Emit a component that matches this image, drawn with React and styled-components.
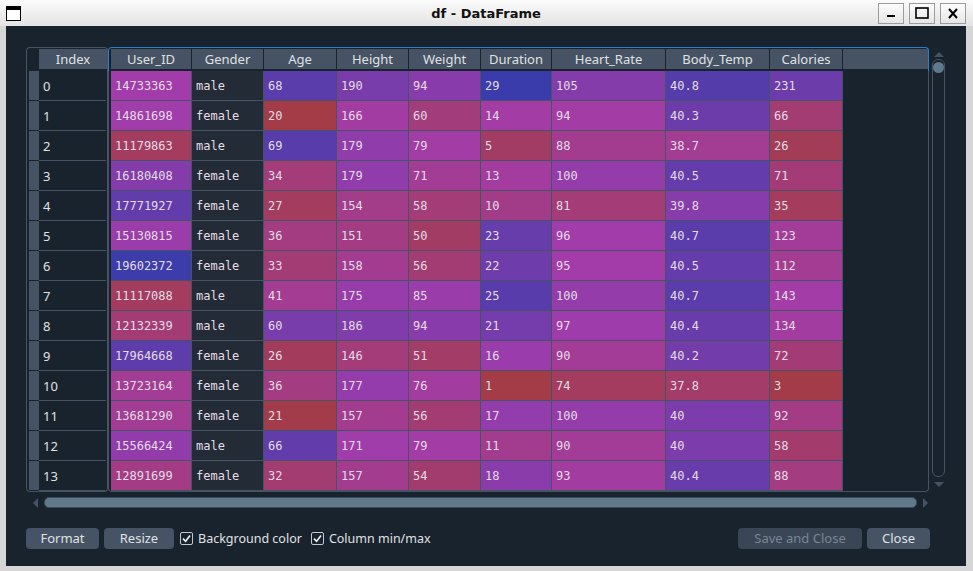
import React from "react";
import styled, { createGlobalStyle } from "styled-components";

const GlobalStyle = createGlobalStyle`
  html, body {
    margin: 0;
    padding: 0;
    background: #d6d6d6;
  }
  body {
    font-family: "Noto Sans", "DejaVu Sans", sans-serif;
  }
`;

const BG = [25, 35, 45];

const columns = [
  { key: "User_ID", w: 81, range: [10001159, 19999647] },
  { key: "Gender", w: 72 },
  { key: "Age", w: 73, range: [20, 79] },
  { key: "Height", w: 72, range: [123, 222] },
  { key: "Weight", w: 72, range: [36, 132] },
  { key: "Duration", w: 71, range: [1, 30] },
  { key: "Heart_Rate", w: 114, range: [67, 128] },
  { key: "Body_Temp", w: 104, range: [37.1, 41.5] },
  { key: "Calories", w: 73, range: [1, 314] },
];

const rows = [
  ["14733363", "male", "68", "190", "94", "29", "105", "40.8", "231"],
  ["14861698", "female", "20", "166", "60", "14", "94", "40.3", "66"],
  ["11179863", "male", "69", "179", "79", "5", "88", "38.7", "26"],
  ["16180408", "female", "34", "179", "71", "13", "100", "40.5", "71"],
  ["17771927", "female", "27", "154", "58", "10", "81", "39.8", "35"],
  ["15130815", "female", "36", "151", "50", "23", "96", "40.7", "123"],
  ["19602372", "female", "33", "158", "56", "22", "95", "40.5", "112"],
  ["11117088", "male", "41", "175", "85", "25", "100", "40.7", "143"],
  ["12132339", "male", "60", "186", "94", "21", "97", "40.4", "134"],
  ["17964668", "female", "26", "146", "51", "16", "90", "40.2", "72"],
  ["13723164", "female", "36", "177", "76", "1", "74", "37.8", "3"],
  ["13681290", "female", "21", "157", "56", "17", "100", "40", "92"],
  ["15566424", "male", "66", "171", "79", "11", "90", "40", "58"],
  ["12891699", "female", "32", "157", "54", "18", "93", "40.4", "88"],
];

// hue from blue (max) to red (min), drawn at 60% over the window colour
function hsv(h, s, v) {
  const i = Math.floor(h * 6) % 6;
  const f = h * 6 - Math.floor(h * 6);
  const p = v * (1 - s);
  const q = v * (1 - f * s);
  const t = v * (1 - (1 - f) * s);
  return [
    [v, t, p],
    [q, v, p],
    [p, v, t],
    [p, q, v],
    [t, p, v],
    [v, p, q],
  ][i];
}

function cellColor(value, range) {
  if (!range) return null;
  const [min, max] = range;
  const hue = 0.66 + 0.33 * ((max - parseFloat(value)) / (max - min));
  const rgb = hsv(hue, 0.7, 1);
  const mixed = rgb.map((c, i) => Math.round(c * 255 * 0.6 + BG[i] * 0.4));
  return `rgb(${mixed.join(",")})`;
}

const Window = styled.div`
  width: 973px;
  height: 571px;
  display: flex;
  flex-direction: column;
  background: #d6d6d6;
  overflow: hidden;
`;

const TitleBar = styled.div`
  height: 26px;
  flex: none;
  display: grid;
  grid-template-columns: 1fr auto 1fr;
  align-items: center;
  padding: 0 7px 0 6px;
  background: linear-gradient(#fbfbfb, #e3e3e3);
`;

const AppIcon = styled.div`
  width: 13px;
  height: 10px;
  border: 1px solid #000;
  border-top: 4px solid #000;
  background: #fff;
`;

const Title = styled.div`
  font-family: "DejaVu Sans", sans-serif;
  font-weight: bold;
  font-size: 13px;
  color: #111;
`;

const WinButtons = styled.div`
  justify-self: end;
  display: flex;
  gap: 5px;
`;

const WinButton = styled.div`
  width: 24px;
  height: 19px;
  border: 1px solid #9c9c9c;
  background: linear-gradient(#fdfdfd, #e6e6e6);
  display: flex;
  align-items: center;
  justify-content: center;
  svg {
    display: block;
  }
`;

const Body = styled.div`
  flex: 1;
  margin: 0 7px 5px 6px;
  background: #19232d;
  padding: 21px 0 0 20px;
  display: flex;
  flex-direction: column;
`;

const TableArea = styled.div`
  display: grid;
  grid-template-columns: 82px 821px 16px;
  grid-template-rows: 24px 421px;
`;

const IndexHead = styled.div`
  box-sizing: border-box;
  border: 1px solid #455364;
  border-bottom: none;
  border-radius: 4px 4px 0 0;
  padding: 1px 0 2px 12px;
`;

const HeadCell = styled.div`
  box-sizing: border-box;
  width: ${(p) => (p.$w ? `${p.$w}px` : "auto")};
  flex: ${(p) => (p.$w ? "none" : "1")};
  height: 20px;
  line-height: 20px;
  background: #455364;
  color: #e0e1e3;
  font-size: 13px;
  text-align: center;
  border-right: 1px solid #19232d;
  &:last-child {
    border-right: none;
  }
`;

const MainHead = styled.div`
  box-sizing: border-box;
  border: 1px solid #2b7fc9;
  border-bottom: none;
  border-radius: 4px 4px 0 0;
  padding: 1px 0 2px 2px;
  display: flex;
`;

const IndexBody = styled.div`
  box-sizing: border-box;
  border: 1px solid #455364;
  border-top: none;
  border-radius: 0 0 4px 4px;
  padding: 0 1px 0 2px;
  overflow: hidden;
`;

const IndexRow = styled.div`
  display: flex;
  height: 30px;
`;

const Stub = styled.div`
  width: 10px;
  flex: none;
  background: #455364;
  border-bottom: 1px solid #19232d;
`;

const IndexCell = styled.div`
  flex: 1;
  box-sizing: border-box;
  padding: 1px 0 0 4px;
  line-height: 28px;
  border-bottom: 1px solid #455364;
  color: #e0e1e3;
  font-size: 13px;
`;

const MainBody = styled.div`
  box-sizing: border-box;
  border: 1px solid #455364;
  border-top: none;
  border-radius: 0 0 4px 4px;
  padding-left: 2px;
  overflow: hidden;
`;

const DataRow = styled.div`
  display: flex;
  height: 30px;
`;

const Cell = styled.div`
  box-sizing: border-box;
  width: ${(p) => p.$w}px;
  flex: none;
  padding: 1px 0 0 4px;
  line-height: 28px;
  border-right: 1px solid #455364;
  border-bottom: 1px solid #455364;
  background: #222b36;
  color: #e4dde6;
  font-family: "DejaVu Sans Mono", monospace;
  font-size: 12px;
  white-space: nowrap;
`;

const VScroll = styled.div`
  grid-column: 3;
  grid-row: 1 / 3;
  margin-left: 3px;
  width: 13px;
  padding-top: 5px;
  display: flex;
  flex-direction: column;
  align-items: center;
`;

const Arrow = styled.div`
  width: 0;
  height: 0;
  border-left: ${(p) => (p.$dir === "right" ? "5px solid #455364" : p.$dir === "left" ? "none" : "5px solid transparent")};
  border-right: ${(p) => (p.$dir === "left" ? "5px solid #455364" : p.$dir === "right" ? "none" : "5px solid transparent")};
  border-top: ${(p) => (p.$dir === "down" ? "5px solid #455364" : p.$dir === "up" ? "none" : "5px solid transparent")};
  border-bottom: ${(p) => (p.$dir === "up" ? "5px solid #455364" : p.$dir === "down" ? "none" : "5px solid transparent")};
  flex: none;
`;

const VTrack = styled.div`
  box-sizing: border-box;
  width: 13px;
  height: 418px;
  margin: 2px 0 5px;
  border: 1px solid #455364;
  border-radius: 6px;
  padding: 2px 0 0;
  display: flex;
  justify-content: center;
`;

const VHandle = styled.div`
  width: 11px;
  height: 11px;
  border-radius: 50%;
  background: #60798b;
`;

const HScroll = styled.div`
  margin-top: 4px;
  width: 895px;
  padding-left: 7px;
  display: flex;
  align-items: center;
  gap: 4px;
`;

const HTrack = styled.div`
  flex: 1;
  box-sizing: border-box;
  height: 13px;
  padding: 1px 2px;
  display: flex;
`;

const HHandle = styled.div`
  flex: 1;
  box-sizing: border-box;
  border-radius: 5px;
  border: 1px solid #3d4b5a;
  background: #60798b;
`;

const ButtonBar = styled.div`
  margin-top: 19px;
  width: 904px;
  display: flex;
  align-items: center;
`;

const Button = styled.div`
  box-sizing: border-box;
  height: 21px;
  width: ${(p) => p.$w}px;
  margin-left: ${(p) => p.$ml || 0}px;
  border-radius: 4px;
  background: ${(p) => (p.$disabled ? "#3a4656" : "#455364")};
  color: ${(p) => (p.$disabled ? "#788694" : "#e0e1e3")};
  font-size: 13px;
  line-height: 21px;
  text-align: center;
`;

const Check = styled.label`
  display: flex;
  align-items: center;
  gap: 5px;
  margin-left: ${(p) => p.$ml}px;
  color: #e0e1e3;
  font-size: 12.5px;
`;

const Box = styled.span`
  box-sizing: border-box;
  width: 13px;
  height: 13px;
  border: 1px solid #c4c8cc;
  border-radius: 2px;
  display: flex;
  align-items: center;
  justify-content: center;
`;

const Spacer = styled.div`
  flex: 1;
`;

const Tick = () => (
  <svg width="9" height="9" viewBox="0 0 9 9">
    <path d="M1 4.6 L3.6 7.2 L8 1.6" fill="none" stroke="#f2f2f2" strokeWidth="1.6" />
  </svg>
);

const CheckBox = ({ label, ml }) => (
  <Check $ml={ml}>
    <Box>
      <Tick />
    </Box>
    {label}
  </Check>
);

export default function App() {
  return (
    <>
      <GlobalStyle />
      <Window>
        <TitleBar>
          <AppIcon />
          <Title>df - DataFrame</Title>
          <WinButtons>
            <WinButton>
              <svg width="10" height="10" viewBox="0 0 10 10">
                <rect x="1" y="7" width="8" height="2" fill="#000" />
              </svg>
            </WinButton>
            <WinButton>
              <svg width="14" height="12" viewBox="0 0 14 12">
                <rect x="1" y="1" width="12" height="10" fill="none" stroke="#000" strokeWidth="1.6" />
              </svg>
            </WinButton>
            <WinButton>
              <svg width="10" height="11" viewBox="0 0 10 11">
                <path d="M1 1 L9 10 M9 1 L1 10" stroke="#000" strokeWidth="2" />
              </svg>
            </WinButton>
          </WinButtons>
        </TitleBar>
        <Body>
          <TableArea>
            <IndexHead>
              <HeadCell>Index</HeadCell>
            </IndexHead>
            <MainHead>
              {columns.map((c) => (
                <HeadCell key={c.key} $w={c.w}>
                  {c.key}
                </HeadCell>
              ))}
              <HeadCell />
            </MainHead>
            <VScroll>
              <Arrow $dir="up" />
              <VTrack>
                <VHandle />
              </VTrack>
              <Arrow $dir="down" />
            </VScroll>
            <IndexBody>
              {rows.map((r, i) => (
                <IndexRow key={i}>
                  <Stub />
                  <IndexCell>{i}</IndexCell>
                </IndexRow>
              ))}
            </IndexBody>
            <MainBody>
              {rows.map((r, i) => (
                <DataRow key={i}>
                  {r.map((v, j) => {
                    const bg = cellColor(v, columns[j].range);
                    return (
                      <Cell key={j} $w={columns[j].w} style={bg ? { background: bg } : undefined}>
                        {v}
                      </Cell>
                    );
                  })}
                </DataRow>
              ))}
            </MainBody>
          </TableArea>
          <HScroll>
            <Arrow $dir="left" />
            <HTrack>
              <HHandle />
            </HTrack>
            <Arrow $dir="right" />
          </HScroll>
          <ButtonBar>
            <Button $w={73}>Format</Button>
            <Button $w={70} $ml={5}>Resize</Button>
            <CheckBox label="Background color" ml={6} />
            <CheckBox label="Column min/max" ml={9} />
            <Spacer />
            <Button $w={124} $disabled>Save and Close</Button>
            <Button $w={63} $ml={5}>Close</Button>
          </ButtonBar>
        </Body>
      </Window>
    </>
  );
}
